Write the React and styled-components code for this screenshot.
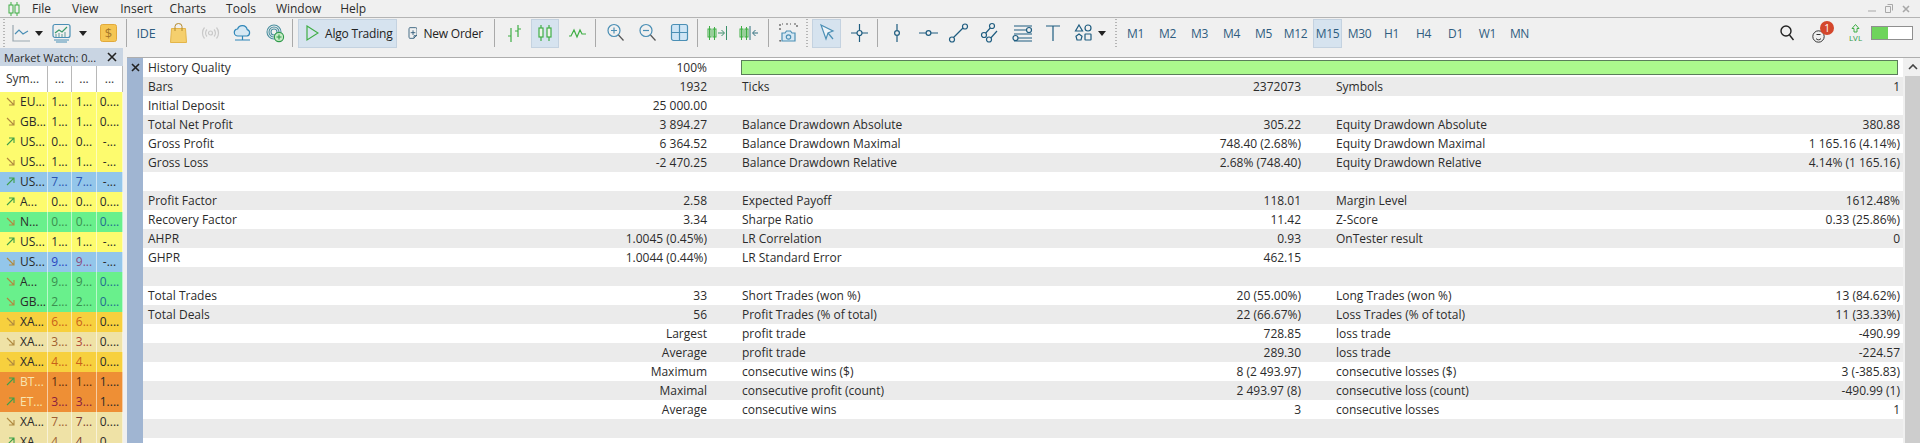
import React from "react";
import styled, { createGlobalStyle } from "styled-components";

const GlobalStyle = createGlobalStyle`
  html, body {
    margin: 0;
    height: 443px;
    overflow: hidden;
    background: #f0f0f0;
  }
  body {
    font-family: "Open Sans", "Noto Sans", sans-serif;
    color: #222;
  }
`;

const Page = styled.div`
  width: 1920px;
  height: 443px;
  overflow: hidden;
  background: #f0f0f0;
`;

const MenuBar = styled.div`
  height: 17px;
  display: flex;
  align-items: center;
  border-bottom: 1px solid #b4b4b4;
  position: relative;
`;

const AppLogo = styled.svg`
  width: 12px;
  height: 14px;
  margin-left: 8px;
`;

const MenuItem = styled.span`
  font-size: 12px;
  color: #2b2b2b;
  margin-left: ${(p) => p.$ml}px;
`;

const WindowButtons = styled.div`
  margin-left: auto;
  margin-right: 10px;
  display: flex;
  gap: 9px;
  align-items: center;
  color: #a8a8a8;
`;

const Toolbar = styled.div`
  height: 30px;
  display: flex;
  align-items: center;
`;

const Tool = styled.div`
  width: ${(p) => p.$w}px;
  height: ${(p) => p.$h || 20}px;
  margin-left: ${(p) => p.$ml || 0}px;
  flex: none;
  display: flex;
  align-items: center;
  justify-content: center;
  svg {
    display: block;
    overflow: visible;
  }
`;

const Sep = styled.div`
  width: 1px;
  height: 28px;
  flex: none;
  margin-left: ${(p) => p.$ml || 0}px;
  background: #a9a9a9;
`;

const Dots = styled.div`
  width: 2px;
  height: 28px;
  flex: none;
  margin-left: ${(p) => p.$ml || 0}px;
  background-image: linear-gradient(#b5b5b5 50%, transparent 50%);
  background-size: 2px 3px;
`;

const ActiveButton = styled.div`
  height: 29px;
  width: ${(p) => p.$w}px;
  margin-left: ${(p) => p.$ml || 0}px;
  padding-left: ${(p) => p.$pl || 0}px;
  flex: none;
  display: flex;
  align-items: center;
  justify-content: ${(p) => (p.$text ? "flex-start" : "center")};
  gap: ${(p) => p.$gap || 0}px;
  box-sizing: border-box;
  font-size: 12px;
  letter-spacing: -0.2px;
  white-space: nowrap;
  color: #222;
  background: ${(p) => (p.$active ? "#d6e3ef" : "transparent")};
  border: 1px solid ${(p) => (p.$active ? "#c4d2e0" : "transparent")};
`;

const IdeLabel = styled.span`
  font-size: 12.5px;
  color: #2f5d80;
  letter-spacing: -0.2px;
`;

const Frame = styled.div`
  width: 29px;
  height: 29px;
  box-sizing: border-box;
  margin-left: ${(p) => p.$ml}px;
  flex: none;
  display: flex;
  align-items: center;
  justify-content: center;
  font-size: 12px;
  letter-spacing: -0.3px;
  color: #2f5d80;
  background: ${(p) => (p.$active ? "#d6e3ef" : "transparent")};
  border: 1px solid ${(p) => (p.$active ? "#c4d2e0" : "transparent")};
`;

const RightTools = styled.div`
  margin-left: auto;
  display: flex;
  align-items: center;
  padding-right: 7px;
`;

const Badge = styled.span`
  position: absolute;
  right: -2px;
  top: -2px;
  width: 14px;
  height: 14px;
  border-radius: 50%;
  background: #d4472c;
  color: #fff;
  font-size: 10px;
  line-height: 14px;
  text-align: center;
`;

const NotifyIcon = styled.div`
  position: relative;
  width: 20px;
  height: 20px;
  margin-left: 18px;
  display: flex;
  align-items: flex-end;
`;

const Toggle = styled.div`
  width: 42px;
  height: 14px;
  margin-left: 9px;
  box-sizing: border-box;
  border: 1px solid #8f8f8f;
  background: linear-gradient(90deg, #6fd45c 40%, #fff 40%);
`;

const Body = styled.div`
  display: flex;
  height: 395px;
`;

const Sidebar = styled.aside`
  width: 123px;
  flex: none;
  background: #fff;
`;

const SideTitle = styled.div`
  height: 18px;
  display: flex;
  align-items: center;
  justify-content: space-between;
  padding: 0 6px 0 4px;
  background: #c9d5e3;
  font-size: 11px;
  color: #2a2a2a;
`;

const WatchRow = styled.div`
  display: grid;
  grid-template-columns: 48px 24px 25px 26px;
  height: ${(p) => p.$h || 20}px;
  font-size: 12px;
  background: ${(p) => p.$bg || "#fff"};
`;

const WatchCell = styled.div`
  display: flex;
  align-items: center;
  justify-content: ${(p) => (p.$first ? "flex-start" : "center")};
  gap: 5px;
  padding-left: ${(p) => (p.$first ? 6 : 0)}px;
  padding-bottom: 2px;
  box-sizing: border-box;
  border-right: 1px solid ${(p) => p.$line || "rgba(255,255,255,0.55)"};
  color: ${(p) => p.$color || "#2a2a2a"};
  overflow: hidden;
  white-space: nowrap;
`;

const HeadCell = styled(WatchCell)`
  border-right: 1px solid #b8b8b8;
  color: #333;
`;

const Main = styled.main`
  margin-left: 4px;
  flex: 1;
  min-width: 0;
  display: flex;
  flex-direction: column;
`;

const StripTop = styled.div`
  height: 9px;
  flex: none;
  border-bottom: 1px solid #aeaeae;
`;

const ReportArea = styled.div`
  flex: 1;
  display: flex;
  min-height: 0;
`;

const DockStrip = styled.div`
  width: 16px;
  flex: none;
  background: #a0b5d2;
  display: flex;
  justify-content: center;
  padding-top: 5px;
  box-sizing: border-box;
`;

const Report = styled.div`
  width: 1760px;
  flex: none;
  overflow: hidden;
`;

const Row = styled.div`
  height: 19px;
  display: grid;
  grid-template-columns: 559px 559px 564px;
  column-gap: 35px;
  padding-left: 5px;
  font-size: 12px;
  line-height: 19px;
  color: #2b2b2b;
  background: ${(p) => (p.$odd ? "#ebebeb" : "#fff")};
`;

const Cell = styled.div`
  display: flex;
  justify-content: space-between;
  white-space: nowrap;
`;

const QualityBar = styled.div`
  grid-column: 2 / 4;
  margin: 2px 2px 2px -1px;
  background: #abf98d;
  border: 1px solid #5a7d5a;
`;

const Scrollbar = styled.div`
  flex: 1;
  background: #f0f0f0;
  display: flex;
  flex-direction: column;
`;

const ScrollArrow = styled.div`
  height: 18px;
  flex: none;
  display: flex;
  align-items: center;
  justify-content: center;
  padding-left: 2px;
`;

const ScrollThumb = styled.div`
  flex: 1;
  margin-left: 2px;
  background: #cdcdcd;
`;

const STROKE = "#4b8fb5";
const GREEN = "#3fae45";

function Ic({ w, h = 20, children, stroke = STROKE, sw = 1.2 }) {
  return (
    <svg width={w} height={h} viewBox={`0 0 ${w} ${h}`} fill="none" stroke={stroke} strokeWidth={sw}>
      {children}
    </svg>
  );
}

function Caret() {
  return (
    <svg width="8" height="5" viewBox="0 0 8 5">
      <path d="M0 0h8L4 5z" fill="#222" />
    </svg>
  );
}

const reportRows = [
  { bar: true, a: ["History Quality", "100%"] },
  { a: ["Bars", "1932"], b: ["Ticks", "2372073"], c: ["Symbols", "1"] },
  { a: ["Initial Deposit", "25 000.00"] },
  { a: ["Total Net Profit", "3 894.27"], b: ["Balance Drawdown Absolute", "305.22"], c: ["Equity Drawdown Absolute", "380.88"] },
  { a: ["Gross Profit", "6 364.52"], b: ["Balance Drawdown Maximal", "748.40 (2.68%)"], c: ["Equity Drawdown Maximal", "1 165.16 (4.14%)"] },
  { a: ["Gross Loss", "-2 470.25"], b: ["Balance Drawdown Relative", "2.68% (748.40)"], c: ["Equity Drawdown Relative", "4.14% (1 165.16)"] },
  {},
  { a: ["Profit Factor", "2.58"], b: ["Expected Payoff", "118.01"], c: ["Margin Level", "1612.48%"] },
  { a: ["Recovery Factor", "3.34"], b: ["Sharpe Ratio", "11.42"], c: ["Z-Score", "0.33 (25.86%)"] },
  { a: ["AHPR", "1.0045 (0.45%)"], b: ["LR Correlation", "0.93"], c: ["OnTester result", "0"] },
  { a: ["GHPR", "1.0044 (0.44%)"], b: ["LR Standard Error", "462.15"] },
  {},
  { a: ["Total Trades", "33"], b: ["Short Trades (won %)", "20 (55.00%)"], c: ["Long Trades (won %)", "13 (84.62%)"] },
  { a: ["Total Deals", "56"], b: ["Profit Trades (% of total)", "22 (66.67%)"], c: ["Loss Trades (% of total)", "11 (33.33%)"] },
  { a: ["", "Largest"], b: ["profit trade", "728.85"], c: ["loss trade", "-490.99"] },
  { a: ["", "Average"], b: ["profit trade", "289.30"], c: ["loss trade", "-224.57"] },
  { a: ["", "Maximum"], b: ["consecutive wins ($)", "8 (2 493.97)"], c: ["consecutive losses ($)", "3 (-385.83)"] },
  { a: ["", "Maximal"], b: ["consecutive profit (count)", "2 493.97 (8)"], c: ["consecutive loss (count)", "-490.99 (1)"] },
  { a: ["", "Average"], b: ["consecutive wins", "3"], c: ["consecutive losses", "1"] },
  {},
  {},
];

const YEL = "#fdfb6e";
const BLU = "#93c6ea";
const GRN = "#69f08c";
const GLD = "#f7d03e";
const BEI = "#efe2a6";
const ORG = "#ee8f35";

const watch = [
  { s: "EU...", v: ["1...", "1...", "0...."], bg: YEL, dn: true },
  { s: "GB...", v: ["1...", "1...", "0...."], bg: YEL, dn: true },
  { s: "US...", v: ["0...", "0...", "-..."], bg: YEL },
  { s: "US...", v: ["1...", "1...", "-..."], bg: YEL, dn: true },
  { s: "US...", v: ["7...", "7...", "-..."], bg: BLU, c: "#2a55b0" },
  { s: "A...", v: ["0...", "0...", "0...."], bg: YEL },
  { s: "N...", v: ["0...", "0...", "0...."], bg: GRN, dn: true, c: "#3b8f50", c3: "#1f6f8f" },
  { s: "US...", v: ["1...", "1...", "-..."], bg: YEL },
  { s: "US...", v: ["9...", "9...", "-..."], bg: BLU, dn: true, c: "#2a45c0", c2: "#8a4a80" },
  { s: "A...", v: ["9...", "9...", "0...."], bg: GRN, dn: true, c: "#3b8f50", c3: "#1f6f8f" },
  { s: "GB...", v: ["2...", "2...", "0...."], bg: GRN, dn: true, c: "#3b8f50", c3: "#1f6f8f" },
  { s: "XA...", v: ["6...", "6...", "0...."], bg: GLD, dn: true, c: "#c8601a" },
  { s: "XA...", v: ["3...", "3...", "0...."], bg: BEI, dn: true, c: "#a06030", c2: "#b04a3a" },
  { s: "XA...", v: ["4...", "4...", "0...."], bg: GLD, dn: true, c: "#c8601a" },
  { s: "BT...", v: ["1...", "1...", "1...."], bg: ORG, light: true, c: "#5a2a10" },
  { s: "ET...", v: ["3...", "3...", "1...."], bg: ORG, light: true, c: "#8a2040" },
  { s: "XA...", v: ["7...", "7...", "0...."], bg: BEI, dn: true, c: "#a06030", c2: "#7a3a30" },
  { s: "XA...", v: ["4...", "4...", "0...."], bg: BEI, c: "#a06030", c2: "#7a3a30" },
];

function TrendArrow({ down, color }) {
  return (
    <svg width="9" height="9" viewBox="0 0 9 9" fill="none" stroke={color} strokeWidth="1.1" style={{ flex: "none" }}>
      {down ? <path d="M1 1l7 7M8 3v5H3" /> : <path d="M1 8l7-7M3 1h5v5" />}
    </svg>
  );
}

function Candles({ stroke = GREEN }) {
  return (
    <Ic w={16} stroke={stroke}>
      <path d="M4 2v16M12 2v16" />
      <rect x="2" y="5" width="4" height="9" fill="#eef5e8" />
      <rect x="10" y="5" width="4" height="9" fill="#eef5e8" />
    </Ic>
  );
}

function MiniCandles() {
  return (
    <svg width="10" height="14" viewBox="0 0 10 14" fill="none" stroke={GREEN}>
      <path d="M2.5 0v14M7.5 1v13" />
      <rect x="1" y="3" width="3" height="8" />
      <rect x="6" y="3" width="3" height="8" />
    </svg>
  );
}

function Dot({ cx, cy, r = 2.5 }) {
  return <circle cx={cx} cy={cy} r={r} fill="#f0f0f0" />;
}

export default function App() {
  return (
    <Page>
      <GlobalStyle />
      <MenuBar>
        <AppLogo viewBox="0 0 12 14" fill="none" stroke={GREEN}>
          <path d="M3 0v14M9 0v14" />
          <rect x="1" y="3" width="4" height="8" fill="#f0f0f0" />
          <rect x="7" y="3" width="4" height="8" fill="#f0f0f0" />
        </AppLogo>
        <MenuItem $ml={12}>File</MenuItem>
        <MenuItem $ml={21}>View</MenuItem>
        <MenuItem $ml={22}>Insert</MenuItem>
        <MenuItem $ml={17}>Charts</MenuItem>
        <MenuItem $ml={20}>Tools</MenuItem>
        <MenuItem $ml={20}>Window</MenuItem>
        <MenuItem $ml={19}>Help</MenuItem>
        <WindowButtons>
          <svg width="8" height="8" viewBox="0 0 8 8" stroke="#a8a8a8"><path d="M0 6h8" /></svg>
          <svg width="8" height="9" viewBox="0 0 8 9" fill="none" stroke="#a8a8a8"><path d="M2.5 0.5h5v6M0.5 2.5h5v6h-5z" /></svg>
          <svg width="8" height="8" viewBox="0 0 8 8" stroke="#a8a8a8" strokeWidth="1.6"><path d="M1 1l6 6M7 1l-6 6" /></svg>
        </WindowButtons>
      </MenuBar>

      <Toolbar>
        <Dots $ml={3} />
        <Tool $w={18} $ml={7}>
          <Ic w={18}>
            <path d="M1 2v16h17" stroke="#9aa7b0" />
            <path d="M3 11l4-4 4 4 5-3" />
          </Ic>
        </Tool>
        <Tool $w={8} $ml={5}><Caret /></Tool>
        <Tool $w={19} $ml={9}>
          <Ic w={19}>
            <rect x="1" y="1.5" width="17" height="13" rx="2" />
            <path d="M3 10l4-3 3 2 5-5" stroke="#3a9a6a" />
            <path d="M4 14v-3M7 14v-4M10 14v-3M13 14v-5" stroke="#7aa" />
            <path d="M2 17h15M4 19h11" />
          </Ic>
        </Tool>
        <Tool $w={8} $ml={8}><Caret /></Tool>
        <Tool $w={17} $ml={13}>
          <svg width="17" height="18" viewBox="0 0 17 18">
            <rect x="0.5" y="0.5" width="16" height="17" rx="2" fill="#f5c654" stroke="#e2a93a" />
            <text x="8.5" y="13.5" fontSize="13" fontFamily="Open Sans" textAnchor="middle" fill="#a8782a">$</text>
          </svg>
        </Tool>
        <Sep $ml={9} />
        <Tool $w={18} $ml={10}><IdeLabel>IDE</IdeLabel></Tool>
        <Tool $w={17} $ml={15}>
          <svg width="17" height="20" viewBox="0 0 17 20" fill="none">
            <path d="M1.5 5.5h14l1 14H0.5z" fill="#f5cf6d" stroke="#e4b548" />
            <path d="M5 8V3.5a3.5 3 0 0 1 7 0V8" stroke="#b58a2e" />
          </svg>
        </Tool>
        <Tool $w={17} $ml={15}>
          <Ic w={17} stroke="#c9c9c9">
            <circle cx="8.5" cy="10" r="2" />
            <path d="M5 6.5a5 5 0 0 0 0 7M12 6.5a5 5 0 0 1 0 7M2.5 4.5a8.5 8.5 0 0 0 0 11M14.5 4.5a8.5 8.5 0 0 1 0 11" />
          </Ic>
        </Tool>
        <Tool $w={17} $ml={15}>
          <Ic w={17} stroke="#2f86b8">
            <path d="M4 13a3.5 3.5 0 0 1-.4-7 5 5 0 0 1 9.6 .6A3.3 3.3 0 0 1 13 13z" fill="#d6e8f3" />
            <path d="M8.5 13v4M1 17h15" />
          </Ic>
        </Tool>
        <Tool $w={18} $ml={15}>
          <svg width="18" height="20" viewBox="0 0 18 20" fill="none" stroke="#4a8f9f" strokeWidth="1.1">
            <circle cx="8" cy="9" r="7" />
            <circle cx="8" cy="9" r="5" />
            <circle cx="8" cy="9" r="3" />
            <circle cx="13" cy="14" r="4.6" fill="#c6ecc6" stroke="#2f9a4a" />
            <path d="M13 11.5v5M10.5 14h5" stroke="#2f9a4a" />
          </svg>
        </Tool>
        <Sep $ml={8} />
        <ActiveButton $w={99} $ml={5} $active $text $pl={6} $gap={6}>
          <Ic w={14} stroke={GREEN}>
            <path d="M2 3l11 7-11 7z" />
          </Ic>
          Algo Trading
        </ActiveButton>
        <ActiveButton $w={77} $ml={10} $text $gap={6}>
          <Ic w={14} stroke="#1f4f6f">
            <path d="M2.5 2h9a2 2 0 0 1 2 2v9l-5 5h-6a2 2 0 0 1-1-2V4a2 2 0 0 1 1-2z" />
            <path d="M7.5 6v7M4 9.5h7M9 18v-4h4" />
          </Ic>
          New Order
        </ActiveButton>
        <Sep $ml={10} />
        <Tool $w={16} $ml={12}>
          <Ic w={16} stroke={GREEN}>
            <path d="M4 5v14M1 13h3M11 2v12M11 6h3M8 8h3" />
          </Ic>
        </Tool>
        <ActiveButton $w={28} $ml={8} $active><Candles /></ActiveButton>
        <Tool $w={17} $ml={10}>
          <Ic w={17} stroke={GREEN}>
            <path d="M0 13h2l3-6 3 7 3-7 2 4h4" />
          </Ic>
        </Tool>
        <Sep $ml={9} />
        <Tool $w={17} $ml={11}>
          <Ic w={17}>
            <circle cx="7" cy="7.5" r="6" />
            <path d="M11.5 12l5 5.5" stroke="#555" />
            <path d="M4 7.5h6M7 4.5v6" />
          </Ic>
        </Tool>
        <Tool $w={17} $ml={15}>
          <Ic w={17}>
            <circle cx="7" cy="7.5" r="6" />
            <path d="M11.5 12l5 5.5" stroke="#555" />
            <path d="M4 7.5h6" />
          </Ic>
        </Tool>
        <Tool $w={17} $ml={15}>
          <Ic w={17}>
            <rect x="0.5" y="1.5" width="16" height="16" rx="2" fill="#cfe5f5" />
            <path d="M8.5 1.5v16M0.5 9.5h16" />
          </Ic>
        </Tool>
        <Sep $ml={9} />
        <Tool $w={20} $ml={9} $h={18}>
          <MiniCandles />
          <svg width="10" height="14" viewBox="0 0 10 14" fill="none" stroke="#3b8f6a">
            <path d="M1 7h6M4.5 4l3 3-3 3M9.5 0v14" />
          </svg>
        </Tool>
        <Tool $w={20} $ml={12} $h={18}>
          <MiniCandles />
          <svg width="10" height="14" viewBox="0 0 10 14" fill="none" stroke="#2f6f7f">
            <path d="M1 0v14M9 7H4M6.5 4l-3 3 3 3" />
          </svg>
        </Tool>
        <Sep $ml={9} />
        <Tool $w={19} $ml={10}>
          <Ic w={19}>
            <path d="M1 17v1h3M1 7V1h3M7 1h5M15 1h3v3" stroke="#555" strokeDasharray="2 2" />
            <path d="M3 10h3l1.5-2h4l1.5 2h3v8H3z" fill="#d6e8f3" />
            <circle cx="9.5" cy="14" r="2.2" />
          </Ic>
        </Tool>
        <Dots $ml={8} />
        <ActiveButton $w={29} $ml={4} $active>
          <Ic w={16}>
            <path d="M2 2l12 6-5 2-2 6z" fill="#eef4f9" />
            <path d="M9 10l5 6" />
          </Ic>
        </ActiveButton>
        <Tool $w={17} $ml={10}>
          <Ic w={17} stroke="#1f5d80">
            <path d="M8.5 1v6M8.5 13v6M0 10h6M11 10h6" />
            <circle cx="8.5" cy="10" r="2.5" />
          </Ic>
        </Tool>
        <Sep $ml={9} />
        <Tool $w={6} $ml={16}>
          <Ic w={6} stroke="#1f5d80">
            <path d="M3 1v6M3 13v6" />
            <circle cx="3" cy="10" r="2.4" />
          </Ic>
        </Tool>
        <Tool $w={19} $ml={19}>
          <Ic w={19} stroke="#1f5d80">
            <path d="M0 10h7M12 10h7" />
            <circle cx="9.5" cy="10" r="2.4" />
          </Ic>
        </Tool>
        <Tool $w={19} $ml={11}>
          <Ic w={19} stroke="#1f5d80">
            <path d="M4 15L15 4" />
            <Dot cx={3} cy={16.5} />
            <Dot cx={16} cy={3.5} />
          </Ic>
        </Tool>
        <Tool $w={19} $ml={13}>
          <Ic w={19} stroke="#1f5d80">
            <path d="M3 12l8-9M8 17l8-9" />
            <Dot cx={3} cy={12} />
            <Dot cx={11} cy={3} />
            <Dot cx={8} cy={16.5} />
          </Ic>
        </Tool>
        <Tool $w={19} $ml={13}>
          <Ic w={19} stroke="#1f5d80">
            <path d="M1 3h18M1 7h13M1 11h18M5 15h14M1 18h18" />
            <Dot cx={16} cy={7} />
            <Dot cx={2.5} cy={15} />
          </Ic>
        </Tool>
        <Tool $w={14} $ml={14}>
          <Ic w={14} stroke="#1f5d80">
            <path d="M0 3h14M7 3v15" />
          </Ic>
        </Tool>
        <Tool $w={17} $ml={15}>
          <Ic w={17} stroke="#1f5d80">
            <path d="M4 2l3.5 6h-7z" />
            <circle cx="13" cy="5" r="3" />
            <path d="M4 11l3 2.2-1 3.8H2l-1-3.8z" />
            <rect x="10" y="11" width="6" height="6" rx="0.5" />
          </Ic>
        </Tool>
        <Tool $w={8} $ml={6}><Caret /></Tool>
        <Dots $ml={9} />
        <Frame $ml={4}>M1</Frame>
        <Frame $ml={3}>M2</Frame>
        <Frame $ml={3}>M3</Frame>
        <Frame $ml={3}>M4</Frame>
        <Frame $ml={3}>M5</Frame>
        <Frame $ml={3}>M12</Frame>
        <Frame $ml={3} $active>M15</Frame>
        <Frame $ml={3}>M30</Frame>
        <Frame $ml={3}>H1</Frame>
        <Frame $ml={3}>H4</Frame>
        <Frame $ml={3}>D1</Frame>
        <Frame $ml={3}>W1</Frame>
        <Frame $ml={3}>MN</Frame>
        <RightTools>
          <Tool $w={14}>
            <Ic w={14} stroke="#222" sw={1.4}>
              <circle cx="6" cy="8" r="5" />
              <path d="M9.5 12l4 5" />
            </Ic>
          </Tool>
          <NotifyIcon>
            <svg width="13" height="13" viewBox="0 0 13 13" fill="none" stroke="#333">
              <circle cx="6.5" cy="6.5" r="5.7" />
              <path d="M4 8.5a3 3 0 0 0 5 0M4.5 4.5h4" />
            </svg>
            <Badge>1</Badge>
          </NotifyIcon>
          <Tool $w={13} $ml={17} $h={18}>
            <svg width="13" height="18" viewBox="0 0 13 18" fill="none">
              <path d="M6.5 0.5l3.5 4H8v3.5H5V4.5H3z" stroke={GREEN} />
              <text x="6.5" y="17" fontSize="8" fontFamily="Open Sans" textAnchor="middle" fill="#2f9a4a">LVL</text>
            </svg>
          </Tool>
          <Toggle />
        </RightTools>
      </Toolbar>

      <Body>
        <Sidebar>
          <SideTitle>
            Market Watch: 0...
            <svg width="10" height="10" viewBox="0 0 10 10" stroke="#222" strokeWidth="1.6"><path d="M1 1l8 8M9 1l-8 8" /></svg>
          </SideTitle>
          <WatchRow $h={26}>
            <HeadCell $first>Sym...</HeadCell>
            <HeadCell>...</HeadCell>
            <HeadCell>...</HeadCell>
            <HeadCell>...</HeadCell>
          </WatchRow>
          {watch.map((r, i) => (
            <WatchRow key={i} $bg={r.bg}>
              <WatchCell $first $color={r.light ? "#f7e5b0" : "#2a2a2a"}>
                <TrendArrow down={r.dn} color={r.dn ? "#b08a40" : "#3f9f4a"} />
                {r.s}
              </WatchCell>
              <WatchCell $color={r.c}>{r.v[0]}</WatchCell>
              <WatchCell $color={r.c2 || r.c}>{r.v[1]}</WatchCell>
              <WatchCell $color={r.c3}>{r.v[2]}</WatchCell>
            </WatchRow>
          ))}
        </Sidebar>

        <Main>
          <StripTop />
          <ReportArea>
            <DockStrip>
              <svg width="9" height="9" viewBox="0 0 9 9" stroke="#222" strokeWidth="1.6"><path d="M1 1l7 7M8 1l-7 7" /></svg>
            </DockStrip>
            <Report>
              {reportRows.map((r, i) => (
                <Row key={i} $odd={i % 2 === 1}>
                  <Cell>
                    <span>{r.a && r.a[0]}</span>
                    <span>{r.a && r.a[1]}</span>
                  </Cell>
                  {r.bar ? (
                    <QualityBar />
                  ) : (
                    <>
                      <Cell>
                        <span>{r.b && r.b[0]}</span>
                        <span>{r.b && r.b[1]}</span>
                      </Cell>
                      <Cell>
                        <span>{r.c && r.c[0]}</span>
                        <span>{r.c && r.c[1]}</span>
                      </Cell>
                    </>
                  )}
                </Row>
              ))}
            </Report>
            <Scrollbar>
              <ScrollArrow>
                <svg width="10" height="6" viewBox="0 0 10 6" fill="none" stroke="#444" strokeWidth="1.6"><path d="M1 5l4-4 4 4" /></svg>
              </ScrollArrow>
              <ScrollThumb />
            </Scrollbar>
          </ReportArea>
        </Main>
      </Body>
    </Page>
  );
}
